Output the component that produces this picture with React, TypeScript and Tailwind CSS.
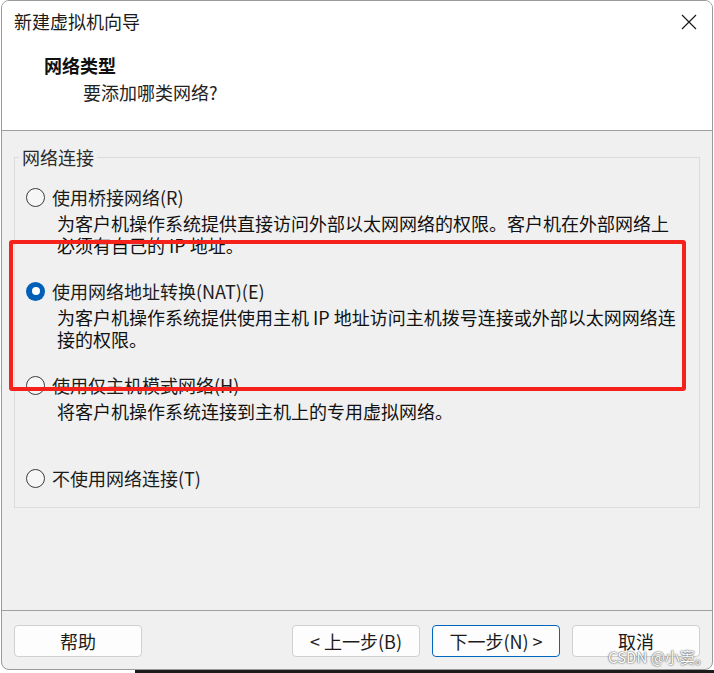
import React from 'react';

const font = { fontFamily: '"Noto Sans CJK SC", "Noto Sans", sans-serif' };

const Radio = ({ checked }: { checked?: boolean }) =>
  checked ? (
    <span className="w-[19px] h-[19px] rounded-full bg-[#005fb8] flex items-center justify-center shrink-0">
      <span className="w-[8px] h-[8px] rounded-full bg-white"></span>
    </span>
  ) : (
    <span className="w-[19px] h-[19px] rounded-full border border-[#3c3c3c] bg-[#f6f6f6] shrink-0"></span>
  );

const Option = ({ label, checked, desc, className }: { label: string; checked?: boolean; desc?: string[]; className?: string }) => (
  <div className={className}>
    <div className="flex items-center h-[22px] gap-[7px]">
      <Radio checked={checked} />
      <span className="text-[#1b1b1b]">{label}</span>
    </div>
    {desc && (
      <div className="pl-[31px] mt-[4px] text-[#111]">
        {desc.map((d) => (
          <div key={d} className="h-[22px] leading-[22px] whitespace-nowrap">{d}</div>
        ))}
      </div>
    )}
  </div>
);

const Btn = ({ children, primary }: { children: React.ReactNode; primary?: boolean }) => (
  <button
    className={
      'w-[128px] h-[32px] rounded-[4px] bg-[#fdfdfd] text-[18px] leading-[30px] ' +
      (primary ? 'border border-[#0067c0] text-[#1b1b1b]' : 'border border-[#d0d0d0] text-[#1b1b1b]')
    }
  >
    {children}
  </button>
);

export default function App() {
  return (
    <div className="w-[714px] h-[673px] bg-white relative overflow-hidden text-[18px] leading-[22px]" style={font}>
      <div className="ml-px w-[712px] h-[670px] border border-[#9a9a9a] rounded-lg overflow-hidden flex flex-col bg-[#f0f0f0]">
        <div className="h-[130px] bg-white border-b border-[#a0a0a0] relative shrink-0">
          <div className="pl-[12px] pt-[9px] text-[18px] text-[#1a1a1a]">新建虚拟机向导</div>
          <svg className="absolute right-[15px] top-[13px]" width="16" height="16" viewBox="0 0 16 16">
            <path d="M1 1 L15 15 M15 1 L1 15" stroke="#1a1a1a" strokeWidth="1.2" fill="none" />
          </svg>
          <div className="pl-[42px] mt-[22px] font-bold text-[#111]">网络类型</div>
          <div className="pl-[81px] mt-[5px] text-[#222]">要添加哪类网络?</div>
        </div>
        <div className="flex-1 px-[12px] pt-[15px]">
          <fieldset className="border border-[#dcdcdc] pb-[17px] h-[362px]">
            <legend className="ml-[4px] px-[3px] text-[#2a2a2a] leading-[22px]">网络连接</legend>
            <div className="pl-[11px]">
              <Option
                className="mt-[18px]"
                label="使用桥接网络(R)"
                desc={['为客户机操作系统提供直接访问外部以太网网络的权限。客户机在外部网络上', '必须有自己的 IP 地址。']}
              />
              <Option
                className="mt-[24px]"
                checked
                label="使用网络地址转换(NAT)(E)"
                desc={['为客户机操作系统提供使用主机 IP 地址访问主机拨号连接或外部以太网网络连', '接的权限。']}
              />
              <Option className="mt-[24px]" label="使用仅主机模式网络(H)" desc={['将客户机操作系统连接到主机上的专用虚拟网络。']} />
              <Option className="mt-[45px]" label="不使用网络连接(T)" />
            </div>
          </fieldset>
        </div>
        <div className="h-[59px] border-t border-[#a0a0a0] px-[12px] pt-[14px] flex justify-between shrink-0">
          <Btn>帮助</Btn>
          <div className="flex gap-[12px]">
            <Btn>&lt; 上一步(B)</Btn>
            <Btn primary>下一步(N) &gt;</Btn>
            <Btn>取消</Btn>
          </div>
        </div>
      </div>
      <div className="flex h-[3px]">
        <div className="w-[135px]"></div>
        <div className="flex-1 bg-[#1c1c1c]"></div>
      </div>
      <div className="absolute left-[9px] top-[240px] w-[677px] h-[151px] border-[4px] border-[#f5221b] rounded-[3px]"></div>
      <div className="absolute left-[608px] top-[647px] whitespace-nowrap text-[15px] leading-[20px] text-white [text-shadow:0_0_2px_#555,0_0_1px_#555]">CSDN @小窦。</div>
    </div>
  );
}
